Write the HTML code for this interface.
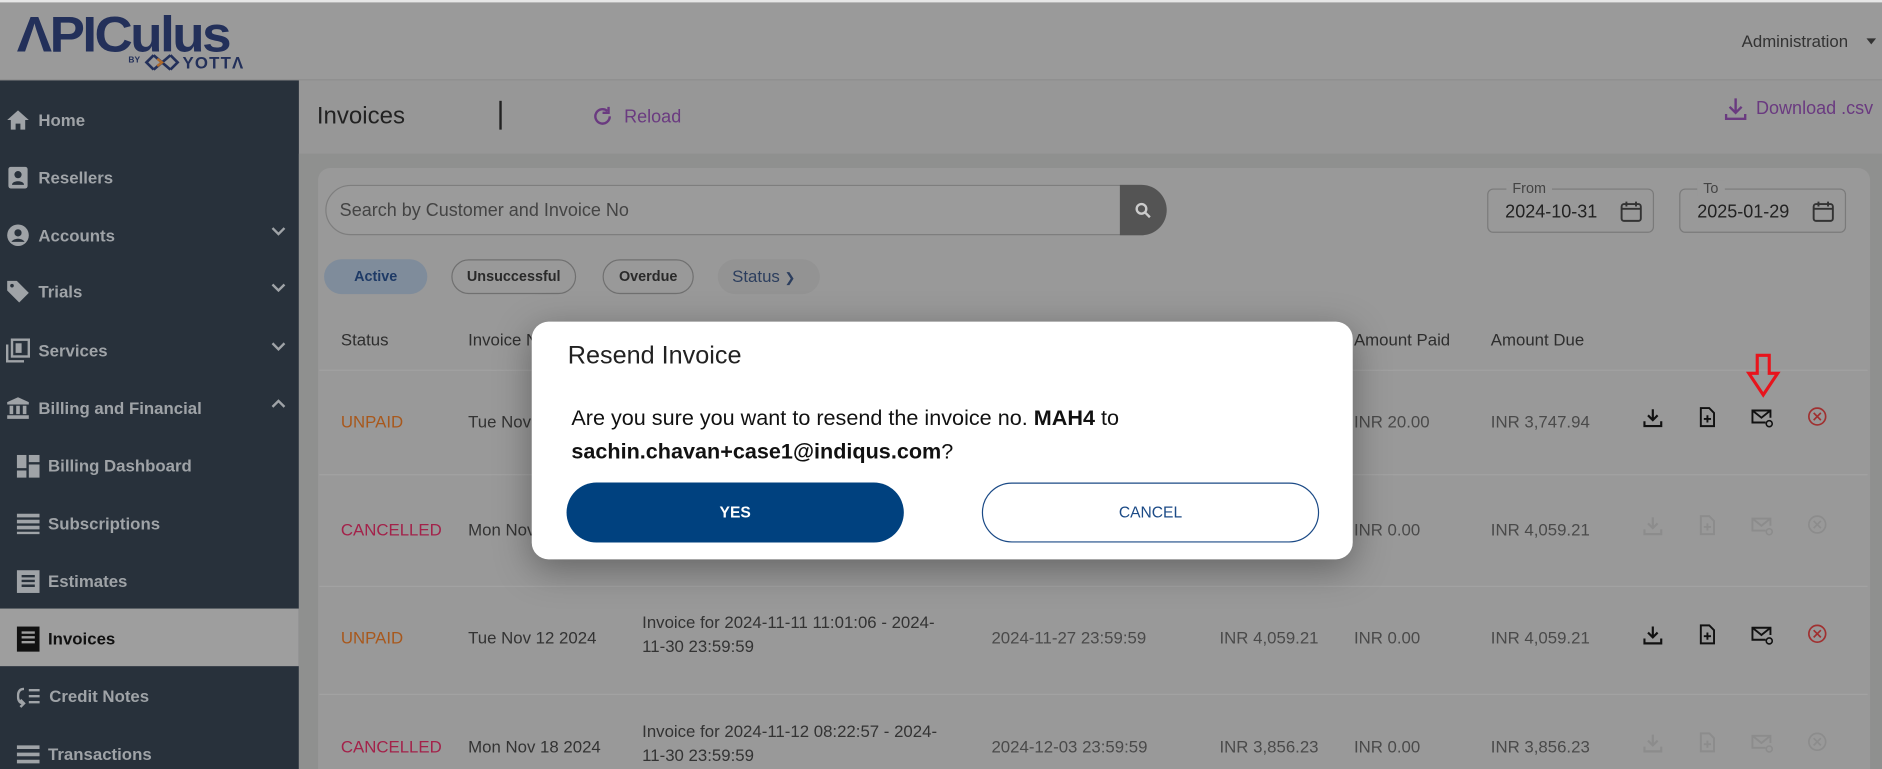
<!DOCTYPE html>
<html><head><meta charset="utf-8">
<style>
*{box-sizing:border-box;margin:0;padding:0}
html,body{width:1882px;height:769px;overflow:hidden;background:#979797}
#s{position:absolute;left:0;top:0;width:1568px;height:641px;transform:scale(1.2003);transform-origin:0 0;font-family:"Liberation Sans",sans-serif;background:#979797;overflow:hidden}
.a{position:absolute;white-space:nowrap}
.hdr{left:0;top:0;width:1568px;height:67px;background:#9a9a9a;border-bottom:1px solid #8e8e8e;border-top:2px solid #e6e6e6}
.side{left:0;top:67px;width:249px;height:574px;background:#28313b}
.ni{position:absolute;left:0;width:249px;height:48px;color:#9fa3a7;font-weight:bold;font-size:14px;display:flex;align-items:center}
.ni svg{margin-left:5px;margin-right:7px}
.ni.sub svg{margin-left:14px}
.ni .chev{position:absolute;left:220px;top:16px}
.card{left:265px;top:140px;width:1293px;height:520px;background:#999;border-radius:10px}
.th{font-size:14px;color:#2e2e2e}
.td{font-size:14px;color:#333}
.g{color:#4a4a4a}
.row{position:absolute;left:266px;width:1290px;height:1px;background:#a2a2a2}
</style></head><body><div id="s">
<div class="a hdr"></div>
<!-- logo -->
<div class="a" style="left:14px;top:5px;font:bold 42px 'Liberation Sans',sans-serif;color:#23305a;letter-spacing:-2px;transform:scaleX(1.05);transform-origin:0 0">ΛPICulus</div>
<div class="a" style="left:107px;top:47px;font:bold 7px 'Liberation Sans';color:#23305a">BY</div>
<svg class="a" style="left:120px;top:44px" width="30" height="16" viewBox="0 0 30 16"><path d="M8 2L2 8l6 6M22 2l6 6-6 6M8 14l14-12M8 2l14 12" stroke="#23305a" stroke-width="2.2" fill="none"/><path d="M11 5l4 3-4 3" stroke="#b06a2a" stroke-width="2" fill="none"/></svg>
<div class="a" style="left:152px;top:44px;font:bold 14px 'Liberation Sans';color:#23305a;letter-spacing:1px">YOTTΛ</div>
<div class="a" style="left:1451px;top:26px;font-size:14px;color:#333">Administration</div>
<div class="a" style="left:1555px;top:32px;border:4px solid transparent;border-top:5px solid #333"></div>
<!-- sidebar -->
<div class="a side"></div>
<div class="ni" style="top:76px"><svg width="20" height="18" viewBox="0 0 20 18"><path d="M10 1L1 9h3v8h4v-5h4v5h4V9h3z" fill="#9fa3a7"/></svg>Home</div>
<div class="ni" style="top:124px"><svg width="20" height="20" viewBox="0 0 20 20"><rect x="2" y="1" width="16" height="18" rx="2" fill="#9fa3a7"/><circle cx="10" cy="7.5" r="3" fill="#28313b"/><path d="M5 16c0-4 10-4 10 0z" fill="#28313b"/></svg>Resellers</div>
<div class="ni" style="top:172px"><svg width="20" height="20" viewBox="0 0 20 20"><circle cx="10" cy="10" r="9" fill="#9fa3a7"/><circle cx="10" cy="8" r="3" fill="#28313b"/><path d="M4.5 15.5c2-3.5 9-3.5 11 0z" fill="#28313b"/></svg>Accounts<svg class="chev" width="14" height="10" viewBox="0 0 14 10"><path d="M2 2l5 5 5-5" stroke="#9fa3a7" stroke-width="2" fill="none"/></svg></div>
<div class="ni" style="top:219px"><svg width="20" height="20" viewBox="0 0 20 20"><path d="M1 1h8l10 10-8 8L1 9z" fill="#9fa3a7"/><circle cx="5" cy="5" r="1.5" fill="#28313b"/></svg>Trials<svg class="chev" width="14" height="10" viewBox="0 0 14 10"><path d="M2 2l5 5 5-5" stroke="#9fa3a7" stroke-width="2" fill="none"/></svg></div>
<div class="ni" style="top:268px"><svg width="20" height="20" viewBox="0 0 20 20"><rect x="5" y="1" width="14" height="14" fill="none" stroke="#9fa3a7" stroke-width="2"/><path d="M1 5v14h14" stroke="#9fa3a7" stroke-width="2" fill="none"/><rect x="8" y="4" width="5" height="8" fill="#9fa3a7"/></svg>Services<svg class="chev" width="14" height="10" viewBox="0 0 14 10"><path d="M2 2l5 5 5-5" stroke="#9fa3a7" stroke-width="2" fill="none"/></svg></div>
<div class="ni" style="top:316px"><svg width="20" height="20" viewBox="0 0 20 20"><path d="M10 1L1 5v2h18V5z M3 8h3v7H3zM8.5 8h3v7h-3zM14 8h3v7h-3zM1 16h18v3H1z" fill="#9fa3a7"/></svg>Billing and Financial<svg class="chev" width="14" height="10" viewBox="0 0 14 10"><path d="M2 7l5-5 5 5" stroke="#9fa3a7" stroke-width="2" fill="none"/></svg></div>
<div class="ni sub" style="top:364px"><svg width="19" height="19" viewBox="0 0 19 19"><path d="M0 0h8v11H0zM10 0h9v6h-9zM10 8h9v11h-9zM0 13h8v6H0z" fill="#9fa3a7"/></svg>Billing Dashboard</div>
<div class="ni sub" style="top:412px"><svg width="19" height="19" viewBox="0 0 19 19"><path d="M0 1h19v3H0zM0 6h19v3H0zM0 11h19v3H0zM0 16h19v2H0z" fill="#9fa3a7"/></svg>Subscriptions</div>
<div class="ni sub" style="top:460px"><svg width="19" height="19" viewBox="0 0 19 19"><rect x="0" y="0" width="19" height="19" fill="#9fa3a7"/><path d="M4 5h11M4 9h11M4 13h11" stroke="#28313b" stroke-width="2"/></svg>Estimates</div>
<div class="a" style="left:0;top:507px;width:249px;height:48px;background:#9e9e9e"></div>
<div class="ni sub" style="top:508px;color:#111"><svg width="19" height="21" viewBox="0 0 19 21"><rect x="0" y="0" width="19" height="21" fill="#111"/><path d="M4 5h11M4 9h11M4 13h11" stroke="#9e9e9e" stroke-width="2"/></svg>Invoices</div>
<div class="ni sub" style="top:556px"><svg width="20" height="19" viewBox="0 0 20 19"><path d="M6 3C2 3 1 6 1 9s1 6 5 6M3 12l3 3-3 3M10 4h9M10 9h9M10 14h9" stroke="#9fa3a7" stroke-width="2" fill="none"/></svg>Credit Notes</div>
<div class="ni sub" style="top:604px"><svg width="19" height="19" viewBox="0 0 19 19"><path d="M0 2h19v3H0zM0 8h19v3H0zM0 14h19v3H0z" fill="#9fa3a7"/></svg>Transactions</div>
<!-- title bar -->
<div class="a" style="left:264px;top:86px;font-size:20px;color:#222">Invoices</div>
<div class="a" style="left:416px;top:84px;width:2px;height:24px;background:#222"></div>
<svg class="a" style="left:493px;top:88px" width="18" height="18" viewBox="0 0 18 18"><path d="M15 9a6 6 0 1 1-2-4.5" stroke="#6a3a80" stroke-width="2" fill="none"/><path d="M14 1v5h-5" stroke="#6a3a80" stroke-width="2" fill="none"/></svg>
<div class="a" style="left:520px;top:89px;font-size:15px;color:#6a3a80">Reload</div>
<svg class="a" style="left:1437px;top:81px" width="18" height="20" viewBox="0 0 18 20"><path d="M9 1v11M4 8l5 5 5-5M1 14v4h16v-4" stroke="#6a3a80" stroke-width="2" fill="none"/></svg>
<div class="a" style="left:1463px;top:82px;font-size:15px;color:#6a3a80">Download .csv</div>
<!-- content -->
<div class="a" style="left:249px;top:128px;width:1319px;height:513px;background:#8f908f"></div>
<div class="a card"></div>
<div class="a" style="left:271px;top:154px;width:701px;height:42px;border:1px solid #7e7e7e;border-radius:21px;background:#9b9b9b"></div>
<div class="a" style="left:283px;top:167px;font-size:15px;color:#444">Search by Customer and Invoice No</div>
<div class="a" style="left:933px;top:154px;width:39px;height:42px;background:#545454;border-radius:0 21px 21px 0"></div>
<svg class="a" style="left:945px;top:168px" width="14" height="14" viewBox="0 0 14 14"><circle cx="6" cy="6" r="4" stroke="#ccc" stroke-width="2" fill="none"/><path d="M9 9l4 4" stroke="#ccc" stroke-width="2"/></svg>
<div class="a" style="left:1239px;top:157px;width:139px;height:37px;border:1px solid #7a7a7a;border-radius:5px"></div>
<div class="a" style="left:1255px;top:150px;padding:0 5px;background:#999;font-size:12px;color:#444">From</div>
<div class="a" style="left:1254px;top:168px;font-size:15px;color:#222">2024-10-31</div>
<div class="a" style="left:1399px;top:157px;width:139px;height:37px;border:1px solid #7a7a7a;border-radius:5px"></div>
<div class="a" style="left:1414px;top:150px;padding:0 5px;background:#999;font-size:12px;color:#444">To</div>
<div class="a" style="left:1414px;top:168px;font-size:15px;color:#222">2025-01-29</div>
<svg class="a" style="left:1350px;top:167px" width="18" height="18" viewBox="0 0 18 18"><rect x="1" y="3" width="16" height="14" rx="2" stroke="#333" stroke-width="1.6" fill="none"/><path d="M1 7h16M5 1v4M13 1v4" stroke="#333" stroke-width="1.6"/></svg>
<svg class="a" style="left:1510px;top:167px" width="18" height="18" viewBox="0 0 18 18"><rect x="1" y="3" width="16" height="14" rx="2" stroke="#333" stroke-width="1.6" fill="none"/><path d="M1 7h16M5 1v4M13 1v4" stroke="#333" stroke-width="1.6"/></svg>
<div class="a" style="left:270px;top:216px;width:86px;height:29px;border-radius:15px;background:#7f8c9b;font:bold 12px 'Liberation Sans';color:#1e3a66;text-align:center;line-height:29px">Active</div>
<div class="a" style="left:376px;top:216px;width:104px;height:29px;border-radius:15px;border:1.5px solid #707070;font:bold 12px 'Liberation Sans';color:#2a2a2a;text-align:center;line-height:26px">Unsuccessful</div>
<div class="a" style="left:502px;top:216px;width:76px;height:29px;border-radius:15px;border:1.5px solid #707070;font:bold 12px 'Liberation Sans';color:#2a2a2a;text-align:center;line-height:26px">Overdue</div>
<div class="a" style="left:598px;top:216px;width:85px;height:29px;border-radius:15px;background:#939393;font-size:14px;color:#2c3e5e;line-height:29px;padding-left:12px">Status <span style="font-size:11px">&#10095;</span></div>
<div class="a th" style="left:284px;top:275px">Status</div>
<div class="a th" style="left:390px;top:275px">Invoice No</div>
<div class="a th" style="left:1128px;top:275px">Amount Paid</div>
<div class="a th" style="left:1242px;top:275px">Amount Due</div>
<div class="row" style="top:308px"></div><div class="row" style="top:395px"></div><div class="row" style="top:488px"></div><div class="row" style="top:578px"></div>
<!-- rows -->
<div class="a td" style="left:284px;top:343px;color:#a8581c">UNPAID</div>
<div class="a td" style="left:390px;top:343px">Tue Nov 5 2024</div>
<div class="a td g" style="left:1128px;top:343px">INR 20.00</div>
<div class="a td g" style="left:1242px;top:343px">INR 3,747.94</div>
<div class="a td" style="left:284px;top:433px;color:#a3224a">CANCELLED</div>
<div class="a td" style="left:390px;top:433px">Mon Nov 11 2024</div>
<div class="a td g" style="left:1128px;top:433px">INR 0.00</div>
<div class="a td g" style="left:1242px;top:433px">INR 4,059.21</div>
<div class="a td" style="left:284px;top:523px;color:#a8581c">UNPAID</div>
<div class="a td" style="left:390px;top:523px">Tue Nov 12 2024</div>
<div class="a td" style="left:535px;top:508px;line-height:20px">Invoice for 2024-11-11 11:01:06 - 2024-<br>11-30 23:59:59</div>
<div class="a td g" style="left:826px;top:523px">2024-11-27 23:59:59</div>
<div class="a td g" style="left:1016px;top:523px">INR 4,059.21</div>
<div class="a td g" style="left:1128px;top:523px">INR 0.00</div>
<div class="a td g" style="left:1242px;top:523px">INR 4,059.21</div>
<div class="a td" style="left:284px;top:614px;color:#a3224a">CANCELLED</div>
<div class="a td" style="left:390px;top:614px">Mon Nov 18 2024</div>
<div class="a td" style="left:535px;top:599px;line-height:20px">Invoice for 2024-11-12 08:22:57 - 2024-<br>11-30 23:59:59</div>
<div class="a td g" style="left:826px;top:614px">2024-12-03 23:59:59</div>
<div class="a td g" style="left:1016px;top:614px">INR 3,856.23</div>
<div class="a td g" style="left:1128px;top:614px">INR 0.00</div>
<div class="a td g" style="left:1242px;top:614px">INR 3,856.23</div>
<!-- action icons -->
<svg width="0" height="0" style="position:absolute"><defs>
<g id="dl"><path d="M8 1v9M4 6l4 4 4-4M1 11v4h14v-4" stroke="currentColor" stroke-width="1.8" fill="none"/></g>
<g id="fp"><path d="M3 1h7l4 4v11H3z" stroke="currentColor" stroke-width="1.6" fill="none"/><path d="M8.5 7v6M5.5 10h6" stroke="currentColor" stroke-width="1.6"/></g>
<g id="ml"><path d="M12 12H1V2h15v6" stroke="currentColor" stroke-width="1.6" fill="none"/><path d="M1 2l7.5 6L16 2" stroke="currentColor" stroke-width="1.6" fill="none"/><circle cx="15" cy="13" r="2.5" stroke="currentColor" stroke-width="1.3" fill="none"/></g>
<g id="xc"><circle cx="8" cy="8" r="7" stroke="currentColor" stroke-width="1.4" fill="none"/><path d="M5 5l6 6M11 5l-6 6" stroke="currentColor" stroke-width="1.4"/></g>
</defs></svg>
<svg class="a" style="left:1369px;top:340px;color:#111" width="17" height="17"><use href="#dl"/></svg>
<svg class="a" style="left:1414px;top:339px;color:#111" width="17" height="18"><use href="#fp"/></svg>
<svg class="a" style="left:1459px;top:340px;color:#111" width="19" height="17"><use href="#ml"/></svg>
<svg class="a" style="left:1506px;top:339px;color:#a03030" width="17" height="17"><use href="#xc"/></svg>
<svg class="a" style="left:1369px;top:430px;color:#8c8c8c" width="17" height="17"><use href="#dl"/></svg>
<svg class="a" style="left:1414px;top:429px;color:#8c8c8c" width="17" height="18"><use href="#fp"/></svg>
<svg class="a" style="left:1459px;top:430px;color:#8c8c8c" width="19" height="17"><use href="#ml"/></svg>
<svg class="a" style="left:1506px;top:429px;color:#8c8c8c" width="17" height="17"><use href="#xc"/></svg>
<svg class="a" style="left:1369px;top:521px;color:#111" width="17" height="17"><use href="#dl"/></svg>
<svg class="a" style="left:1414px;top:520px;color:#111" width="17" height="18"><use href="#fp"/></svg>
<svg class="a" style="left:1459px;top:521px;color:#111" width="19" height="17"><use href="#ml"/></svg>
<svg class="a" style="left:1506px;top:520px;color:#a03030" width="17" height="17"><use href="#xc"/></svg>
<svg class="a" style="left:1369px;top:611px;color:#8c8c8c" width="17" height="17"><use href="#dl"/></svg>
<svg class="a" style="left:1414px;top:610px;color:#8c8c8c" width="17" height="18"><use href="#fp"/></svg>
<svg class="a" style="left:1459px;top:611px;color:#8c8c8c" width="19" height="17"><use href="#ml"/></svg>
<svg class="a" style="left:1506px;top:610px;color:#8c8c8c" width="17" height="17"><use href="#xc"/></svg>
<!-- red arrow -->
<svg class="a" style="left:1454px;top:294px" width="30" height="38" viewBox="0 0 30 38"><path d="M10 2h10v15h7L15 35 3 17h7z" stroke="#e8141c" stroke-width="2.6" fill="none" stroke-linejoin="miter"/></svg>
<!-- dialog -->
<div class="a" style="left:443px;top:268px;width:684px;height:198px;background:#fff;border-radius:14px;box-shadow:0 8px 30px rgba(0,0,0,.35)"></div>
<div class="a" style="left:473px;top:285px;font-size:21px;color:#222">Resend Invoice</div>
<div class="a" style="left:476px;top:334px;font-size:18px;color:#111;line-height:28px">Are you sure you want to resend the invoice no. <b>MAH4</b> to<br><b>sachin.chavan+case1@indiqus.com</b>?</div>
<div class="a" style="left:472px;top:402px;width:281px;height:50px;border-radius:25px;background:#00417f;color:#fff;font:bold 13px 'Liberation Sans';text-align:center;line-height:50px">YES</div>
<div class="a" style="left:818px;top:402px;width:281px;height:50px;border-radius:25px;border:1px solid #1b4a86;color:#1b4a86;font-size:13px;text-align:center;line-height:48px">CANCEL</div>
</div></body></html>
